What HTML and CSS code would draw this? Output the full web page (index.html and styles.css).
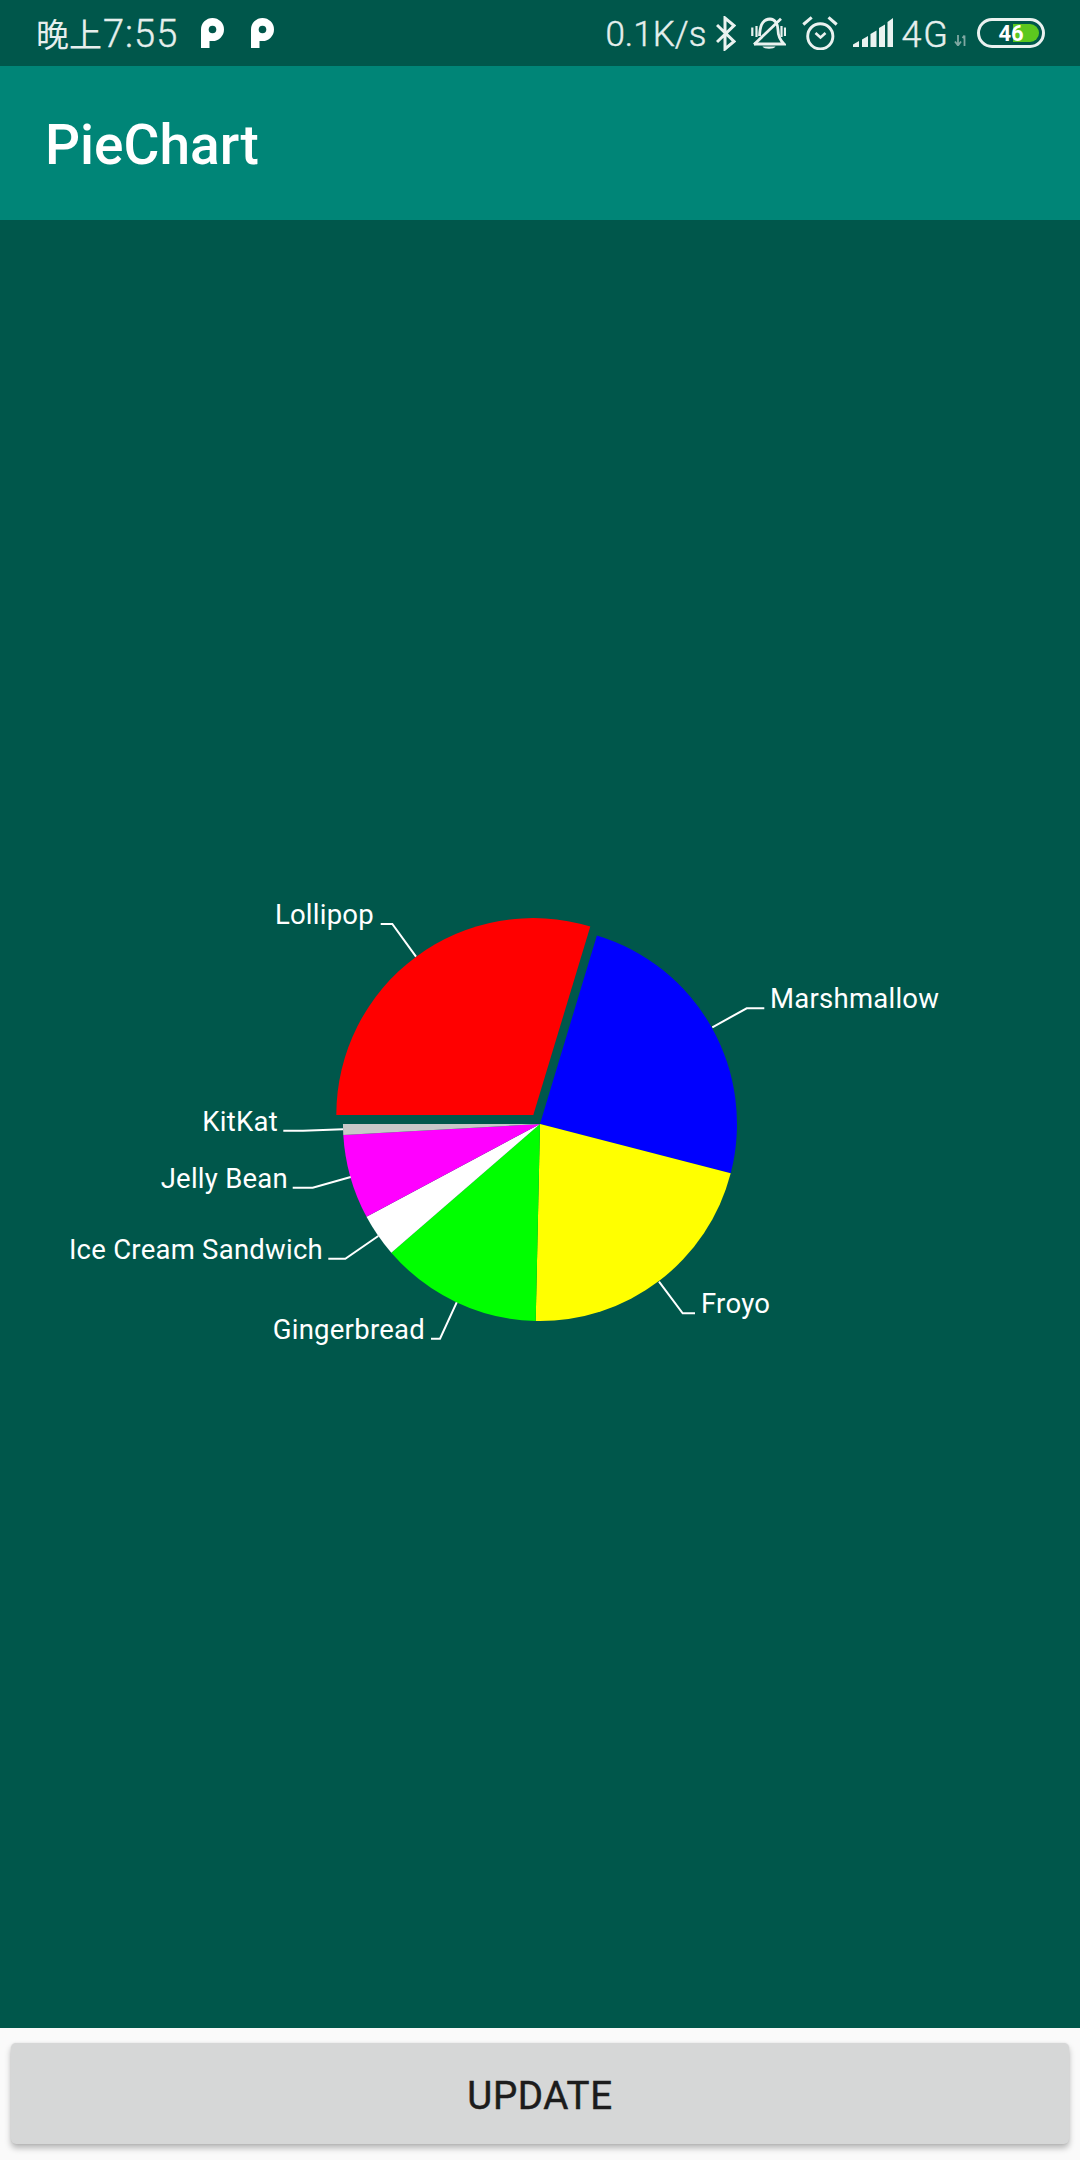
FILE: index.html
```html
<!DOCTYPE html>
<html lang="zh">
<head>
<meta charset="utf-8">
<title>PieChart</title>
<link rel="stylesheet" href="styles.css">
</head>
<body>
<div class="screen">
  <header class="statusbar">
    <div class="status-left">
      <span class="clock">晚上<span class="clock-time">7:55</span></span>
      <svg class="p-icon" viewBox="0 0 23 30"><path d="M0 30V11.500A11.500 11.500 0 1 1 11.500 23H8.500V30Z" fill="#fff"/><circle cx="11.500" cy="11.500" r="3.800" fill="#00574b"/></svg>
      <svg class="p-icon" viewBox="0 0 23 30"><path d="M0 30V11.500A11.500 11.500 0 1 1 11.500 23H8.500V30Z" fill="#fff"/><circle cx="11.500" cy="11.500" r="3.800" fill="#00574b"/></svg>
    </div>
    <div class="status-right">
      <span class="speed">0.1K/s</span>
      <svg class="i-bt" viewBox="0 0 20 35"><path d="M1 9L18 25.500L9 33V2L18 9.500L1 26" fill="none" stroke="#eaf2f0" stroke-width="3"/></svg>
      <svg class="i-bell" viewBox="0 0 35 34"><g fill="none" stroke="#eaf2f0" stroke-width="2.800"><path d="M8.500 20C9 12 10 3.500 19 3C24 3 27 8 27 14C27 20 29 24 33 28H3"/><path d="M3 28.500L30 2.700"/><path d="M1.300 11.500V20M5.500 10V21M30.500 10V21M34 11.500V20" stroke-width="2.200"/></g><path d="M11.500 30.500H24.500C23 33.500 13 33.500 11.500 30.500Z" fill="#eaf2f0"/></svg>
      <svg class="i-alarm" viewBox="0 0 36 34"><g fill="none" stroke="#eaf2f0"><circle cx="18.300" cy="20.300" r="12.600" stroke-width="2.900"/><path d="M13.500 17L18.500 21.500L23.500 17" stroke-width="2.600"/><path d="M1.300 8.500L9.700 1.300M26.500 1.300L34.700 8.500" stroke-width="3"/></g></svg>
      <svg class="i-signal" viewBox="0 0 40 30"><g fill="#eaf2f0"><path d="M0 26.500L6 23V29H0Z"/><path d="M9 21.500L15 18V29H9Z"/><path d="M17.500 16L23.500 12.500V29H17.500Z"/><path d="M26 10L32 6.500V29H26Z"/><path d="M34.500 4L40 0V29H34.500Z"/></g></svg>
      <span class="net">4G</span>
      <svg class="i-arrows" viewBox="0 0 14 11"><path d="M4 0V10M1 6.500L4 10.500L7 6.500M10.500 11V0.500M8.500 3L10.500 0.500" fill="none" stroke="#7fa8a2" stroke-width="1.800"/></svg>
      <div class="battery"><span class="battery-fill"></span><span class="battery-level">46</span></div>
    </div>
  </header>
  <div class="toolbar"><h1 class="title">PieChart</h1></div>
  <main class="chart-area">
    <svg class="pie" viewBox="0 0 1080 1804">
      <g transform="translate(0 -220)">
        <path fill="#ff0000" d="M533.300 1115L336.300 1115A197 197 0 0 1 590.300 926.500Z"/>
        <path fill="#0000ff" d="M540 1124L596.900 935.400A197 197 0 0 1 730.700 1173.300Z"/>
        <path fill="#ffff00" d="M540 1124L730.700 1173.300A197 197 0 0 1 535.700 1321Z"/>
        <path fill="#00ff00" d="M540 1124L535.700 1321A197 197 0 0 1 391.300 1252.700Z"/>
        <path fill="#ffffff" d="M540 1124L391.300 1252.700A197 197 0 0 1 366.500 1216.800Z"/>
        <path fill="#ff00ff" d="M540 1124L366.500 1216.800A197 197 0 0 1 343.300 1135Z"/>
        <path fill="#c8c8c8" d="M540 1124L343.300 1135A197 197 0 0 1 343 1124Z"/>
        <g class="leaders">
          <path d="M380.700 924H392.300L416 956.700"/>
          <path d="M283.300 1130.700H303L343 1129.300"/>
          <path d="M292.700 1187.700H312.700L350.700 1177"/>
          <path d="M328.300 1258.700H345.300L378.300 1236"/>
          <path d="M431 1338.700H440L456.700 1302.300"/>
          <path d="M695 1313.300H682.700L659 1281.700"/>
          <path d="M764.300 1008.300H746.700L712.300 1027.300"/>
        </g>
        <g class="labels">
          <text x="374" y="924" text-anchor="end">Lollipop</text>
          <text x="278" y="1130.500" text-anchor="end">KitKat</text>
          <text x="288" y="1187.500" text-anchor="end">Jelly Bean</text>
          <text x="323" y="1258.500" text-anchor="end">Ice Cream Sandwich</text>
          <text x="425" y="1338.500" text-anchor="end">Gingerbread</text>
          <text x="701" y="1313">Froyo</text>
          <text x="770" y="1007.500">Marshmallow</text>
        </g>
      </g>
    </svg>
  </main>
  <footer class="actions"><button class="update" type="button">Update</button></footer>
</div>
</body>
</html>
```
FILE: styles.css
```css
html, body { margin: 0; padding: 0; }
body { font-family: Roboto, "Noto Sans CJK SC", sans-serif; background: #fafafa; }
.screen { width: 1080px; height: 2160px; display: flex; flex-direction: column; overflow: hidden; }
.statusbar { height: 66px; flex: none; background: #00574b; color: #e6efed; display: flex; align-items: center; justify-content: space-between; padding: 0 35px 0 36px; box-sizing: border-box; }
.status-left, .status-right { display: flex; align-items: center; }
.clock { font-size: 33px; font-weight: 400; margin-right: 23px; display: flex; align-items: baseline; }
.clock-time { font-size: 38px; font-weight: 300; letter-spacing: 1px; margin-left: 1px; -webkit-text-stroke: 0.400px #e6efed; }
.p-icon { width: 23px; height: 30px; margin-right: 27px; }
.p-icon:last-child { margin-right: 0; }
.speed { font-size: 35px; font-weight: 300; margin: 2px 10px 0 0; -webkit-text-stroke: 0.400px #e6efed; }
.i-bt { width: 20px; height: 35px; margin-right: 15px; }
.i-bell { width: 35px; height: 34px; margin-right: 16px; }
.i-alarm { width: 36px; height: 34px; margin-right: 15px; }
.i-signal { width: 40px; height: 30px; margin-right: 8px; }
.net { font-size: 36px; font-weight: 300; letter-spacing: 2px; margin: 3px 4px 0 0; -webkit-text-stroke: 0.400px #e6efed; }
.i-arrows { width: 14px; height: 11px; margin: 14px 9px 0 0; }
.battery { position: relative; width: 68px; height: 30px; box-sizing: border-box; border: 3px solid #eaf2f0; border-radius: 15px; }
.battery-fill { position: absolute; left: 33px; top: 3px; bottom: 3px; right: 3px; background: #5cc81e; border-radius: 0 10px 10px 0; }
.battery-level { position: absolute; inset: 0; display: flex; align-items: center; justify-content: center; font-size: 22px; font-weight: 700; color: #fff; }
.toolbar { height: 154px; flex: none; background: #008577; display: flex; align-items: center; padding: 4px 0 0 45px; box-sizing: border-box; }
.title { margin: 0; font-size: 55px; font-weight: 500; color: #fff; }
.chart-area { flex: 1; min-height: 0; background: #00574b; }
.pie { display: block; width: 1080px; height: 1804px; }
.leaders path { fill: none; stroke: #fff; stroke-width: 2; }
.labels text { font-family: Roboto, sans-serif; font-size: 27.500px; letter-spacing: 0.250px; fill: #fff; }
.actions { height: 132px; flex: none; padding: 15px 11px 16px 11px; box-sizing: border-box; }
.update { display: block; width: 100%; height: 101px; border: 0; border-radius: 5px; padding: 3px 0 0; background: #d6d7d7; color: #1c1c1c; font-family: Roboto, sans-serif; font-size: 38.500px; font-weight: 400; -webkit-text-stroke: 0.500px #1c1c1c; text-transform: uppercase; letter-spacing: 0.600px; box-shadow: 0 4px 6px rgba(0,0,0,.28), 0 0 2px rgba(0,0,0,.1); }
```
